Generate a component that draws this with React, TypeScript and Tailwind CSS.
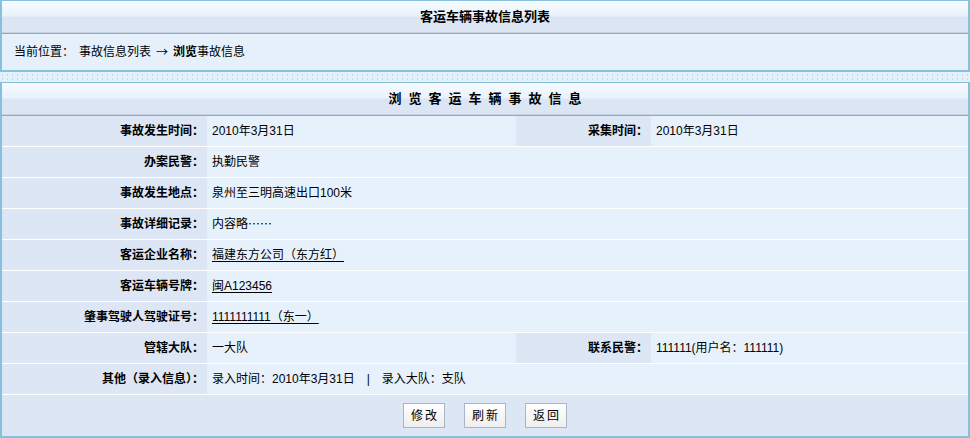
import type { ReactNode } from 'react'

const FONT = "font-['Liberation_Sans','Noto_Sans_CJK_SC',sans-serif]"
const CJK = "font-['Noto_Sans_CJK_SC',sans-serif]"

function HeaderBar({ children }: { children: ReactNode }) {
  return (
    <>
      <div className="flex h-[31px] items-center justify-center bg-[linear-gradient(#f6fbff,#e9f2fb_48%,#dbe5f3_52%,#dbe5f3)] text-[13px] font-bold text-black">
        {children}
      </div>
      <div className="h-px bg-[#c3d3e3]" />
      <div className="h-px bg-[#9ea7b1]" />
    </>
  )
}

function Label({ text, w }: { text: string; w: string }) {
  return (
    <div className={`${w} flex shrink-0 items-center justify-end bg-[#dce6f4] pr-[3px] font-bold`}>
      {text}
    </div>
  )
}

function Value({ children, className = '' }: { children: ReactNode; className?: string }) {
  return <div className={`flex items-center bg-[#e7f1fb] pl-[3px] ${className}`}>{children}</div>
}

function Row({ label, children }: { label: string; children: ReactNode }) {
  return (
    <div className="flex h-[31px] gap-[2px] border-b border-white">
      <Label text={label} w="w-[205px]" />
      <Value className="flex-1">{children}</Value>
    </div>
  )
}

function SplitRow({
  label,
  value,
  label2,
  value2,
}: {
  label: string
  value: ReactNode
  label2: string
  value2: ReactNode
}) {
  return (
    <div className="flex h-[31px] gap-[2px] border-b border-white">
      <Label text={label} w="w-[205px]" />
      <Value className="w-[305px] shrink-0">{value}</Value>
      <Label text={label2} w="w-[135px]" />
      <Value className="flex-1">{value2}</Value>
    </div>
  )
}

function Btn({ text }: { text: string }) {
  return (
    <button className="h-[25px] w-[42px] border border-[#a9b5c4] bg-[linear-gradient(#ffffff,#eeeeee)] pl-[2px] text-[12px] tracking-[2px] text-black">
      {text}
    </button>
  )
}

export default function App() {
  return (
    <div className={`${FONT} h-[438px] w-[970px] overflow-hidden bg-[#e3f1fb] text-[12px] text-black`}>
      <div className="border-x-2 border-t border-b-2 border-[#86c0dd]">
        <HeaderBar>客运车辆事故信息列表</HeaderBar>
        <div className="flex h-[36px] items-center bg-[#e6f0fb] pl-[12px]">
          <span>当前位置：</span>
          <span className="ml-[5px]">事故信息列表</span>
          <span className={`${CJK} ml-[5px] text-[12px]`}>→</span>
          <span className="ml-[5px] font-bold">浏览</span>
          <span>事故信息</span>
        </div>
      </div>

      <div className="h-[10px] bg-[radial-gradient(circle,#c2d9ea_0.8px,transparent_1px)] bg-[length:5px_4px] bg-[position:0_1px]" />

      <div className="border-x-2 border-t border-b-2 border-[#86c0dd]">
        <HeaderBar>
          <span className="pl-[7px] tracking-[7px]">浏览客运车辆事故信息</span>
        </HeaderBar>
        <SplitRow label="事故发生时间：" value="2010年3月31日" label2="采集时间：" value2="2010年3月31日" />
        <Row label="办案民警：">执勤民警</Row>
        <Row label="事故发生地点：">泉州至三明高速出口100米</Row>
        <Row label="事故详细记录：">
          <span>内容略</span>
          <span className={CJK}>……</span>
        </Row>
        <Row label="客运企业名称：">
          <span className="underline underline-offset-2">福建东方公司（东方红）</span>
        </Row>
        <Row label="客运车辆号牌：">
          <span className="underline underline-offset-2">闽A123456</span>
        </Row>
        <Row label="肇事驾驶人驾驶证号：">
          <span className="underline underline-offset-2">1111111111（东一）</span>
        </Row>
        <SplitRow label="管辖大队：" value="一大队" label2="联系民警：" value2="111111(用户名：111111)" />
        <Row label="其他（录入信息）：">
          <span>录入时间：2010年3月31日</span>
          <span className="mx-[12px]">|</span>
          <span>录入大队：支队</span>
        </Row>
        <div className="flex h-[41px] items-center justify-center gap-[19px] bg-[#dce6f4]">
          <Btn text="修改" />
          <Btn text="刷新" />
          <Btn text="返回" />
        </div>
      </div>
    </div>
  )
}
